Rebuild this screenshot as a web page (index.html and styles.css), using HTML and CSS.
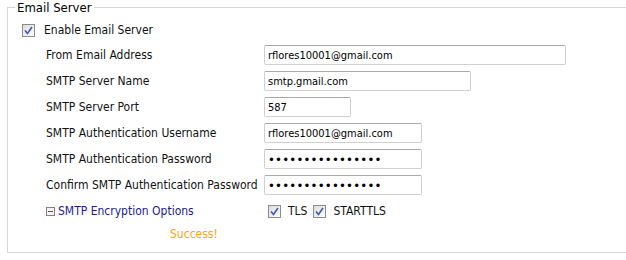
FILE: index.html
```html
<!DOCTYPE html>
<html>
<head>
<meta charset="utf-8">
<link rel="stylesheet" href="styles.css">
</head>
<body>
<fieldset class="box">
  <legend class="legend">Email Server</legend>
  <div class="enable">
    <span class="cb"><svg width="9" height="9" viewBox="0 0 9 9"><path d="M1 4.5 L3.5 7.5 L8 1" fill="none" stroke="#3e5bb5" stroke-width="1.6"/></svg></span>
    <span class="enable-text">Enable Email Server</span>
  </div>
  <div class="form">
    <div class="label">From Email Address</div>
    <div><input class="inp w302" type="text" value="rflores10001@gmail.com"></div>
    <div class="label">SMTP Server Name</div>
    <div><input class="inp w207" type="text" value="smtp.gmail.com"></div>
    <div class="label">SMTP Server Port</div>
    <div><input class="inp w87" type="text" value="587"></div>
    <div class="label">SMTP Authentication Username</div>
    <div><input class="inp w158" type="text" value="rflores10001@gmail.com"></div>
    <div class="label">SMTP Authentication Password</div>
    <div><input class="inp pw w158" type="password" value="abcdefghijklmnop"></div>
    <div class="label">Confirm SMTP Authentication Password</div>
    <div><input class="inp pw w158" type="password" value="abcdefghijklmnop"></div>
    <div class="label enc"><span class="minus"></span><span class="enc-text">SMTP Encryption Options</span></div>
    <div class="opts">
      <span class="cb"><svg width="9" height="9" viewBox="0 0 9 9"><path d="M1 4.5 L3.5 7.5 L8 1" fill="none" stroke="#3e5bb5" stroke-width="1.6"/></svg></span>
      <span class="opt-text">TLS</span>
      <span class="cb"><svg width="9" height="9" viewBox="0 0 9 9"><path d="M1 4.5 L3.5 7.5 L8 1" fill="none" stroke="#3e5bb5" stroke-width="1.6"/></svg></span>
      <span class="opt-text">STARTTLS</span>
    </div>
  </div>
  <div class="success">Success!</div>
</fieldset>
</body>
</html>
```
FILE: styles.css
```css
html, body {
  margin: 0;
  padding: 0;
  background: #fff;
  overflow: hidden;
}
body {
  font-family: "DejaVu Sans Condensed", "DejaVu Sans", sans-serif;
  font-size: 12px;
  color: #111;
}
.box {
  margin: 0 -20px 0 7px;
  padding: 0;
  border: 1px solid #d6d6d6;
  height: 251px;
  box-sizing: content-box;
}
.legend {
  font-size: 13px;
  padding: 0 2px;
  margin-left: 7px;
  line-height: 15px;
  color: #000;
}
.enable {
  display: flex;
  align-items: center;
  height: 14px;
  margin: 8px 0 0 14px;
}
.cb {
  width: 11px;
  height: 11px;
  border: 1px solid #8c8c8c;
  background: linear-gradient(135deg, #dcdcdc 0%, #f4f4f4 70%, #ffffff 100%);
  display: inline-flex;
  align-items: center;
  justify-content: center;
  flex: none;
}
.enable-text {
  margin-left: 9px;
}
.form {
  display: grid;
  grid-template-columns: 218px 1fr;
  grid-auto-rows: 20px;
  row-gap: 6px;
  margin: 8px 0 0 38px;
  align-items: center;
}
.label {
  white-space: nowrap;
}
.inp {
  display: block;
  box-sizing: border-box;
  height: 20px;
  border: 1px solid #cfcfcf;
  border-top-color: #a8a8a8;
  border-radius: 2px;
  padding: 0 3px;
  margin: 0;
  font-family: inherit;
  font-size: 11px;
  color: #000;
  background: #fff;
}
.pw {
  font-size: 13px;
  letter-spacing: 0.2px;
}
.w302 { width: 302px; }
.w207 { width: 207px; }
.w87 { width: 87px; }
.w158 { width: 158px; }
.enc {
  display: flex;
  align-items: center;
}
.minus {
  width: 7px;
  height: 7px;
  border: 1px solid #8a7f7f;
  position: relative;
  margin-right: 3px;
  background: #f3f3f3;
}
.minus::after {
  content: "";
  position: absolute;
  left: 1px;
  right: 1px;
  top: 3px;
  height: 1px;
  background: #5a4f4f;
}
.enc-text {
  color: #1b1b8a;
}
.opts {
  display: flex;
  align-items: center;
  padding-left: 4px;
}
.opt-text {
  margin: 0 6px 0 7px;
}
.success {
  color: #f7a31c;
  margin: 6px 0 0 162px;
}
```
